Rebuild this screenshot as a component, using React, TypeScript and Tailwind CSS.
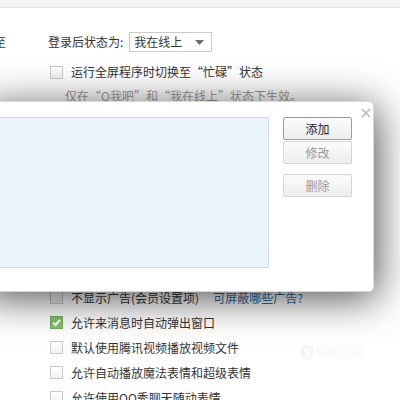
import React from 'react';

const font = { fontFamily: '"Noto Sans CJK SC", "Liberation Sans", sans-serif' };

function Box({ checked }: { checked?: boolean }) {
  if (checked) {
    return (
      <span className="w-[13px] h-[13px] shrink-0 bg-[#86c06c] border border-[#74ad5b] flex items-center justify-center">
        <svg width="11" height="11" viewBox="0 0 11 11">
          <path d="M2 5.6 L4.5 8 L9 2.8" fill="none" stroke="#fff" strokeWidth="2" />
        </svg>
      </span>
    );
  }
  return <span className="w-[13px] h-[13px] shrink-0 border border-[#c9c9c9] bg-gradient-to-b from-white to-[#f1f1f1]" />;
}

function CheckRow({ label, checked, children }: { label: string; checked?: boolean; children?: React.ReactNode }) {
  return (
    <div className="h-[25px] flex items-center pl-[50px]">
      <Box checked={checked} />
      <span className="ml-[8px] text-[12px] text-[#333] whitespace-nowrap">{label}</span>
      {children}
    </div>
  );
}

function DlgButton({ label, primary, className }: { label: string; primary?: boolean; className?: string }) {
  return (
    <button
      className={`w-[69px] h-[23px] rounded-[2px] text-[12px] flex items-center justify-center bg-gradient-to-b from-[#fbfbfb] to-[#eeeeee] ${
        primary ? 'border border-[#9c9c9c] text-[#222]' : 'border border-[#d4d4d4] text-[#9a9a9a]'
      } ${className ?? ''}`}
    >
      {label}
    </button>
  );
}

export default function App() {
  return (
    <div className="relative w-[400px] h-[400px] overflow-hidden bg-white" style={font}>
      {/* strip of the panel above */}
      <div className="h-[8px] bg-[#f4f4f4] border-b border-[#e2e2e2]" />

      {/* login status */}
      <div className="mt-[24px] h-[20px] flex items-center">
        {/* right edge of a label cut off by the view */}
        <span className="w-[6px] overflow-hidden flex justify-end">
          <span className="shrink-0 text-[12px] text-[#333]">至</span>
        </span>
        <span className="ml-[42px] text-[12px] text-[#333] whitespace-nowrap">登录后状态为:</span>
        <div className="ml-[6px] w-[83px] h-[20px] border border-[#cacaca] flex items-center justify-between pl-[4px] pr-[7px]">
          <span className="text-[12px] text-[#333]">我在线上</span>
          <svg width="9" height="5" viewBox="0 0 9 5">
            <path d="M0 0 H9 L4.5 5 Z" fill="#6b6b6b" />
          </svg>
        </div>
      </div>

      <div className="mt-[10px] h-[20px] flex items-center pl-[50px]">
        <Box />
        <span className="ml-[8px] text-[12px] text-[#333] whitespace-nowrap">运行全屏程序时切换至“忙碌”状态</span>
      </div>
      <div className="mt-[6px] h-[16px] flex items-center pl-[65px]">
        <span className="text-[12px] text-[#9a9a9a] whitespace-nowrap">仅在“Q我吧”和“我在线上”状态下生效。</span>
      </div>

      {/* options below the dialog */}
      <div className="mt-[181px]">
        <CheckRow label="不显示广告(会员设置项)">
          <span className="ml-[14px] text-[12px] text-[#2d6aa3] whitespace-nowrap">可屏蔽哪些广告?</span>
        </CheckRow>
        <CheckRow label="允许来消息时自动弹出窗口" checked />
        <CheckRow label="默认使用腾讯视频播放视频文件" />
        <CheckRow label="允许自动播放魔法表情和超级表情" />
        <CheckRow label="允许使用QQ秀聊天随动表情" />
      </div>

      {/* watermark */}
      <div className="absolute left-[300px] top-[343px] flex items-center gap-[2px] text-[#f6f6f6]">
        <span className="w-[14px] h-[14px] rounded-full bg-[#f5f5f5] text-white text-[10px] font-bold flex items-center justify-center">S</span>
        <span className="text-[12px]">快速问答</span>
      </div>

      {/* dialog overlay */}
      <div className="absolute left-[-20px] top-[101px] w-[394px] h-[191px] bg-white rounded-r-[5px] border border-[#d8d8d8] shadow-[3px_6px_40px_rgba(0,0,0,0.7)]">
        <div className="flex pt-[15px]">
          <div className="ml-[9px] w-[279px] h-[151px] bg-[#e9f4fb] border border-[#c9dbe7]" />
          <div className="ml-[14px] flex flex-col">
            <DlgButton label="添加" primary />
            <DlgButton label="修改" className="mt-[1px]" />
            <DlgButton label="删除" className="mt-[10px]" />
          </div>
          <svg className="ml-[9px] mt-[-9px]" width="10" height="10" viewBox="0 0 10 10">
            <path d="M1 1 L9 9 M9 1 L1 9" stroke="#b5b5b5" strokeWidth="1.6" />
          </svg>
        </div>
      </div>
    </div>
  );
}
